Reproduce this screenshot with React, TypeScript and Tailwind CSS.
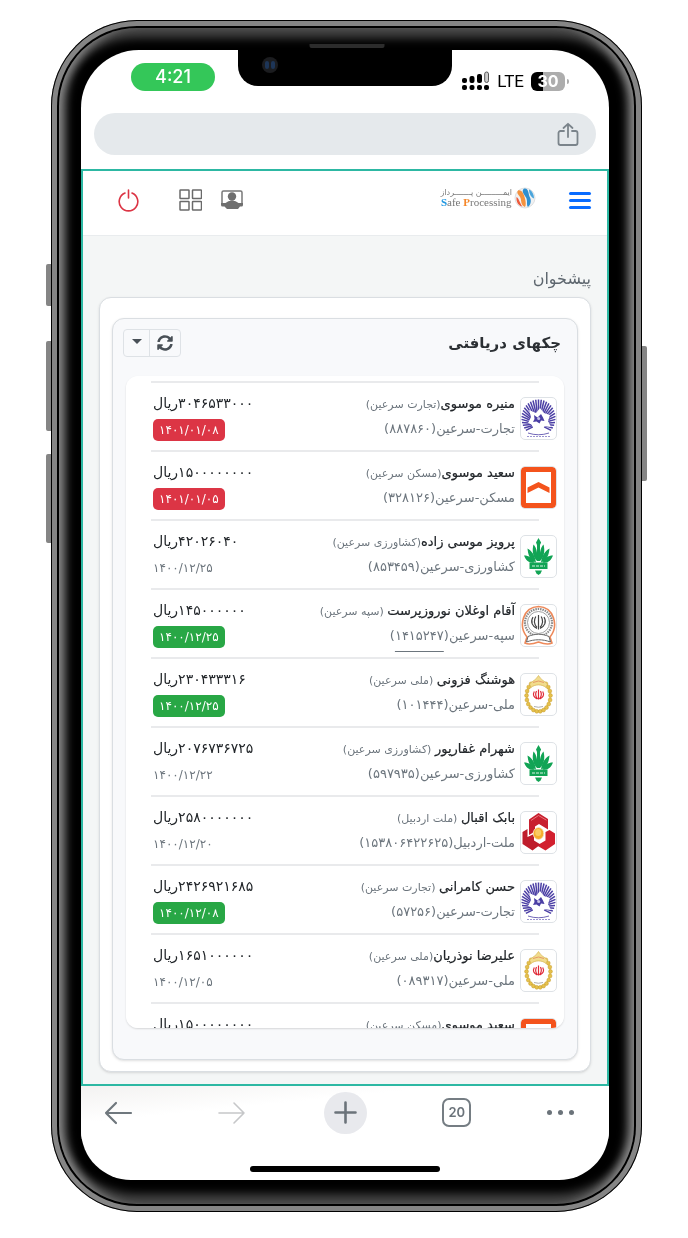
import React from "react";

type Bank = "tejarat" | "maskan" | "keshavarzi" | "sepah" | "melli" | "mellat";
type Tone = "red" | "green" | "plain";

interface Cheque {
  bank: Bank;
  name: string;
  branch: string;
  account: string;
  number: string;
  amount: string;
  date: string;
  tone: Tone;
  underlined?: boolean;
}

const cheques: Cheque[] = [
  { bank: "tejarat", name: "منیره موسوی", branch: "(تجارت سرعین)", account: "تجارت-سرعین", number: "۸۸۷۸۶۰", amount: "۳۰۴۶۵۳۳۰۰۰", date: "۱۴۰۱/۰۱/۰۸", tone: "red" },
  { bank: "maskan", name: "سعید موسوی", branch: "(مسکن سرعین)", account: "مسکن-سرعین", number: "۳۲۸۱۲۶", amount: "۱۵۰۰۰۰۰۰۰۰", date: "۱۴۰۱/۰۱/۰۵", tone: "red" },
  { bank: "keshavarzi", name: "پرویز موسی زاده", branch: "(کشاورزی سرعین)", account: "کشاورزی-سرعین", number: "۸۵۳۴۵۹", amount: "۴۲۰۲۶۰۴۰", date: "۱۴۰۰/۱۲/۲۵", tone: "plain" },
  { bank: "sepah", name: "آقام اوغلان نوروزپرست", branch: " (سپه سرعین)", account: "سپه-سرعین", number: "۱۴۱۵۲۴۷", amount: "۱۴۵۰۰۰۰۰۰", date: "۱۴۰۰/۱۲/۲۵", tone: "green", underlined: true },
  { bank: "melli", name: "هوشنگ فزونی", branch: " (ملی سرعین)", account: "ملی-سرعین", number: "۱۰۱۴۴۴", amount: "۲۳۰۴۳۳۳۱۶", date: "۱۴۰۰/۱۲/۲۵", tone: "green" },
  { bank: "keshavarzi", name: "شهرام غفارپور", branch: " (کشاورزی سرعین)", account: "کشاورزی-سرعین", number: "۵۹۷۹۳۵", amount: "۲۰۷۶۷۳۶۷۲۵", date: "۱۴۰۰/۱۲/۲۲", tone: "plain" },
  { bank: "mellat", name: "بابک اقبال", branch: " (ملت اردبیل)", account: "ملت-اردبیل", number: "۱۵۳۸۰۶۴۲۲۶۲۵", amount: "۲۵۸۰۰۰۰۰۰۰", date: "۱۴۰۰/۱۲/۲۰", tone: "plain" },
  { bank: "tejarat", name: "حسن کامرانی", branch: " (تجارت سرعین)", account: "تجارت-سرعین", number: "۵۷۲۵۶", amount: "۲۴۲۶۹۲۱۶۸۵", date: "۱۴۰۰/۱۲/۰۸", tone: "green" },
  { bank: "melli", name: "علیرضا نوذریان", branch: "(ملی سرعین)", account: "ملی-سرعین", number: "۰۸۹۳۱۷", amount: "۱۶۵۱۰۰۰۰۰۰", date: "۱۴۰۰/۱۲/۰۵", tone: "plain" },
  { bank: "maskan", name: "سعید موسوی", branch: "(مسکن سرعین)", account: "مسکن-سرعین", number: "۳۲۸۱۲۶", amount: "۱۵۰۰۰۰۰۰۰۰", date: "۱۴۰۱/۰۱/۰۵", tone: "red" },
];

const toneClass: Record<Tone, string> = {
  red: "rounded-[5px] bg-[#dc3545] px-[6px] text-white",
  green: "rounded-[5px] bg-[#28a745] px-[6px] text-white",
  plain: "text-[#6c757d]",
};

function Tejarat() {
  const rays = Array.from({ length: 29 }, (_, i) => ((-42 + i * (264 / 28)) * Math.PI) / 180);
  return (
    <>
      {rays.map((a) => {
        const x = 17.5 + 17 * Math.cos(a);
        const y = 20 - 18.5 * Math.sin(a);
        return (
          <line key={a} x1={x} y1={y} x2={x + (17.5 - x) * 0.55} y2={y + (26 - y) * 0.55} stroke="#4b3fa5" strokeWidth="1.5" />
        );
      })}
      <path d="M8 12l7 3 4-5 4 5 6 2-2 6 3 6-8-1-4 5-4-5-7-3 3-6z" fill="#fff" />
      <path d="M13 17l3.500 2.500L20 16l2 3.500 1.500 3.500-3.500-.5-1.500 3-3-2-3.500.5 1.500-3z" fill="#4b3fa5" />
      <circle cx="17.700" cy="20.500" r="1.500" fill="#c9c5ea" />
      <path d="M7 35Q17.500 38.500 28 35" fill="none" stroke="#4b3fa5" strokeWidth="0.8" />
      <path d="M6 38.500H29" stroke="#9a93cf" strokeWidth="1.200" strokeDasharray="2 1" />
    </>
  );
}

function Maskan() {
  return (
    <>
      <rect x="2.5" y="2.5" width="30" height="36" rx="1" fill="#fff" stroke="#f4531c" strokeWidth="5" />
      <path d="M6.500 20.500L17.500 15l11 5.500v5.500L17.500 20.500l-11 5.500z" fill="#f4531c" />
    </>
  );
}

function Keshavarzi() {
  return (
    <g fill="#12a455">
      <path d="M17.5 2l2.600 4.500-1.100 2.500v16h-3V9L15 6.500z" />
      <path d="M16 25C11.500 21 11 14 12.500 8.500c3 3 4 8 4 16z" />
      <path d="M19 25C23.500 21 24 14 22.500 8.500c-3 3-4 8-4 16z" />
      <path d="M15 26.500C8.500 24 7 18 6.500 12.500c4.500 2.500 7.500 7 8.500 14zM20 26.500c6.500-2.500 8-8.500 8.500-14-4.500 2.500-7.500 7-8.500 14z" />
      <path d="M13.500 26.500C8 27.500 5 24.500 3 19.500c5 0 8.500 2.500 10.500 7zM21.500 26.500c5.500 1 8.500-2 10.500-7-5 0-8.500 2.500-10.500 7z" />
      <rect x="8.500" y="26.500" width="18" height="6.500" />
      <path d="M14 34.500h7l-1.500 3L17.500 39l-2-1.500z" />
      <path d="M11 30h13" stroke="#d7f3e3" strokeWidth="1.200" strokeDasharray="3 1" />
    </g>
  );
}

function Sepah() {
  return (
    <>
      <path d="M6 32C-3 21 2 2 17.500 1.500 33 2 38 21 29 32l2 6c-4 2-8 1-13.500-1C12 39 8 40 4 38z" fill="#fff" stroke="#ee8a5b" strokeWidth="1.600" />
      <circle cx="17.500" cy="17.500" r="13.500" fill="none" stroke="#8a8a8a" strokeWidth="2.200" strokeDasharray="1.500 0.900" />
      <circle cx="17.500" cy="17.500" r="11" fill="#fff" stroke="#888" strokeWidth="0.800" />
      <path d="M7 31.500c7-3 14-3 21 0l1.500 5.500c-8-3-16-3-24 0z" fill="#fff" stroke="#666" strokeWidth="1" />
      <path d="M17.500 10v14.500M14.800 11.500c-2 3.500-2 7.500 1.200 11M20.200 11.500c2 3.500 2 7.500-1.200 11M12 12c-3 5-.5 9.500 4 11.500M23 12c3 5 .5 9.500-4 11.500" fill="none" stroke="#444" strokeWidth="1.200" />
    </>
  );
}

function Melli() {
  const leaves = Array.from({ length: 18 }, (_, i) => 128 + i * (284 / 17));
  return (
    <>
      <ellipse cx="17.500" cy="22" rx="11.500" ry="15" fill="none" stroke="#f3df93" strokeWidth="2" />
      {leaves.map((deg) => {
        const a = (deg * Math.PI) / 180;
        return <circle key={deg} cx={17.5 + 12 * Math.cos(a)} cy={22 - 15.5 * Math.sin(a)} r="1.900" fill="#e6c14c" stroke="#c59a2b" strokeWidth="0.500" />;
      })}
      <path d="M8.500 10C11.500 7 15 6 17.500 1.500 20 6 23.500 7 26.500 10l-1.500 3.500c-4-3.500-11-3.500-15 0z" fill="#f1dc8c" stroke="#d8b654" strokeWidth="0.700" />
      <path d="M12 8.500q5.500-3 11 0" fill="none" stroke="#e69a6a" strokeWidth="1" />
      <path d="M17.500 15.500v10M15.500 17c-1.500 3-1 5.500 1 8M19.500 17c1.500 3 1 5.500-1 8M13.300 17.500c-2 3.500-.3 6 3 7.500M21.700 17.500c2 3.500.3 6-3 7.500" fill="none" stroke="#e02a38" strokeWidth="1.200" />
      <path d="M13 32.500q4.500 1.500 9 0" stroke="#999" strokeWidth="0.800" fill="none" />
    </>
  );
}

function Mellat() {
  return (
    <>
      <path d="M8 7.500L17.500 1 27 7v10.500l-9-5.500-4 2.500v5L8 23z" fill="#c8202f" />
      <path d="M28.500 18l5.500 3.500V32l-9.500 6.500-8.500-5 8.500-5V20z" fill="#d2202f" />
      <path d="M1.500 20l5-3v8l6.500-3v6.500l6.500 4L11.500 38.500 1.500 32z" fill="#bf1d2c" />
      <path d="M10 8.500l7.500-5 8 4.700" fill="none" stroke="#ee7f85" strokeWidth="0.900" />
      <ellipse cx="17.500" cy="21.500" rx="5.300" ry="6" fill="#f5ae2d" stroke="#fbe3d0" strokeWidth="0.800" />
      <ellipse cx="17.200" cy="20.500" rx="3" ry="3.500" fill="#fbcb62" />
    </>
  );
}

const logos: Record<Bank, () => React.JSX.Element> = {
  tejarat: Tejarat,
  maskan: Maskan,
  keshavarzi: Keshavarzi,
  sepah: Sepah,
  melli: Melli,
  mellat: Mellat,
};

function ChequeRow({ cheque }: { cheque: Cheque }) {
  const Logo = logos[cheque.bank];
  return (
    <li>
      <div className="mx-[25px] h-[2px] bg-[#e9eaec]" />
      <div className="flex h-[67px] items-start gap-[5px] pl-[27px] pr-[7px] pt-[8px]">
        <div className="mt-[6px] h-[43px] w-[37px] shrink-0 overflow-hidden rounded-[5px] border border-[#dee2e6] bg-white">
          <svg viewBox="0 0 35 41" className="h-full w-full" aria-hidden="true">
            <Logo />
          </svg>
        </div>
        <div className="min-w-0 flex-1 whitespace-pre leading-[25px]">
          <p className="h-[25px] text-[11px] text-[#6c757d]">
            <span className="text-[13px] text-[#212529] [-webkit-text-stroke:0.2px_#212529]">{cheque.name}</span>
            {cheque.branch}
          </p>
          <p className="h-[25px] text-[13px] text-[#6c757d]">
            {cheque.account}(
            <span className={cheque.underlined ? "underline decoration-1 underline-offset-[11px]" : ""}>{cheque.number}</span>)
          </p>
        </div>
        <div className="flex shrink-0 flex-col items-end whitespace-nowrap">
          <p className="h-[25px] text-[14px] leading-[25px] text-[#212529]">{cheque.amount}ریال</p>
          <span className={`mt-[3px] text-[12px] leading-[22px] ${toneClass[cheque.tone]}`}>{cheque.date}</span>
        </div>
      </div>
    </li>
  );
}

function StatusBar() {
  return (
    <div dir="ltr" className="flex h-[63px] items-start justify-between pl-[50px] pr-[40px] pt-[13px] font-['Inter',sans-serif]">
      <div className="h-[28px] w-[84px] rounded-full bg-[#34c759] text-center text-[18px] font-medium leading-[28px] text-white">4:21</div>
      <div className="flex items-center gap-[7px] pt-[8px]">
        <svg width="28" height="20" viewBox="0 0 28 20" aria-hidden="true">
          <g fill="#000">
            <rect x="0" y="7" width="5" height="5" rx="2" />
            <rect x="7.500" y="5" width="5" height="7" rx="2" />
            <rect x="15" y="3" width="5" height="9" rx="2" />
            <rect x="0" y="14" width="5" height="5" rx="2" />
            <rect x="7.500" y="14" width="5" height="5" rx="2" />
            <rect x="15" y="14" width="5" height="5" rx="2" />
            <rect x="22" y="14" width="5" height="5" rx="2" />
          </g>
          <rect x="22.700" y="1" width="3.800" height="10.500" rx="1.900" fill="#ccc" stroke="#555" strokeWidth="1" />
        </svg>
        <span className="font-['Roboto',sans-serif] text-[17px] leading-[20px] text-black">LTE</span>
        <div className="flex items-center gap-[2px]">
          <span className="h-[19px] w-[34px] rounded-[6px] bg-linear-to-r from-black from-35% to-[#adadad] to-35% text-center text-[16px] font-bold leading-[19px] text-white">30</span>
          <span className="h-[5px] w-[2px] rounded-r-full bg-[#adadad]" />
        </div>
      </div>
    </div>
  );
}

function AddressBar() {
  return (
    <div className="mx-[13px] flex h-[42px] items-center justify-end rounded-full bg-[#e5e9ec] px-[16px]">
      <button type="button" aria-label="Share">
        <svg width="24" height="26" viewBox="0 0 24 26" fill="none" stroke="#7b848b" strokeWidth="1.800" strokeLinecap="round" strokeLinejoin="round" aria-hidden="true">
          <path d="M8 10H4.500a2 2 0 0 0-2 2v10a2 2 0 0 0 2 2h15a2 2 0 0 0 2-2V12a2 2 0 0 0-2-2H16" />
          <path d="M12 16V3M7.500 7L12 2.800 16.500 7" />
        </svg>
      </button>
    </div>
  );
}

function Brand() {
  return (
    <div className="flex items-center gap-[2px]">
      <svg width="22" height="22" viewBox="0 0 22 22" aria-hidden="true">
        <circle cx="11" cy="11" r="10" fill="#f0f1f2" stroke="#d8dadc" strokeWidth="0.800" />
        <path d="M4 3.500c4-1 6 4 7 8s1 7 0 8.500C6 18 8 13 6 10 5 8 2 6 4 3.500z" fill="#f5923e" />
        <path d="M2.500 10c3 2 3 6 6 9.500C4.500 19 2 15 2.500 10z" fill="#ee5a3b" />
        <path d="M10 1.500c5-1 4 5 6 9s0 8-2 9.500c-2-2 0-6-2-9.500s-5-6-2-9z" fill="#2f8fd0" />
        <path d="M15 2.500c3 1 5 5 5 9-3-1-5-5-5-9z" fill="#4aa5dc" />
      </svg>
      <div className="flex flex-col items-center">
        <span className="h-[9px] whitespace-nowrap text-[8px] leading-[9px] text-[#777]">ایمـــــــــن پـــــــرداز</span>
        <span dir="ltr" className="whitespace-nowrap font-['Liberation_Serif',serif] text-[11px] leading-[11px] text-[#777]">
          <span className="font-bold text-[#1e96e0]">S</span>afe <span className="font-bold text-[#f5872a]">P</span>rocessing
        </span>
      </div>
    </div>
  );
}

function AppHeader() {
  return (
    <header className="flex h-[65px] items-center border-b border-[#e9ecee] bg-white pl-[35px] pr-[16px] pb-[6px]">
      <button type="button" aria-label="منو" className="flex w-[22px] flex-col gap-[4px]">
        <span className="h-[3px] rounded-full bg-[#0a6cff]" />
        <span className="h-[3px] rounded-full bg-[#0a6cff]" />
        <span className="h-[3px] rounded-full bg-[#0a6cff]" />
      </button>
      <div className="pr-[33px] pb-[4px]">
        <Brand />
      </div>
      <div className="mr-auto flex items-center">
        <button type="button" aria-label="کاربر">
          <svg width="22" height="20" viewBox="0 0 22 20" aria-hidden="true">
            <path d="M1 15V2.500A1.500 1.500 0 0 1 2.500 1h17A1.500 1.500 0 0 1 21 2.500V15" fill="none" stroke="#777" strokeWidth="1.500" />
            <circle cx="11" cy="6.500" r="4.200" fill="#6f6f6f" />
            <path d="M0 15v-2h4.500Q7 10.500 11 10.500t6.500 2.500H22v2q0 1.500-1.500 1.500h-1.500l-2 2.500H6l-2.500-2.500H1.500Q0 16.500 0 15z" fill="#6f6f6f" />
          </svg>
        </button>
        <button type="button" aria-label="برنامه‌ها" className="mr-[19px]">
          <svg width="23" height="22" viewBox="0 0 23 22" fill="none" stroke="#6a6a6a" strokeWidth="1.500" aria-hidden="true">
            <rect x="1" y="1" width="9" height="8.500" rx="0.500" />
            <rect x="13.500" y="1" width="9" height="8.500" rx="0.500" />
            <rect x="1" y="12.500" width="9" height="8.500" rx="0.500" />
            <rect x="13.500" y="12.500" width="9" height="8.500" rx="0.500" />
          </svg>
        </button>
        <button type="button" aria-label="خروج" className="mr-[40px]">
          <svg width="21" height="23" viewBox="0 0 21 23" fill="none" stroke="#dc3545" strokeWidth="1.600" strokeLinecap="round" aria-hidden="true">
            <path d="M10.500 1v8M7 4a9.300 9.300 0 1 0 7 0" />
          </svg>
        </button>
      </div>
    </header>
  );
}

function ChequesPanel() {
  return (
    <section className="mx-[12px] rounded-[12px] border border-[#dadee2] bg-[#f8f9fb] px-[13px] pb-[31px] pt-[10px] shadow-sm">
      <div className="flex items-start justify-between pr-[3px]">
        <h2 className="h-[47px] text-[15px] font-bold leading-[28px] text-[#2b2f33]">چکهای دریافتی</h2>
        <div className="-ml-[3px] flex h-[28px] overflow-hidden rounded-[4px] border border-[#dee2e6]">
          <button type="button" aria-label="بازخوانی" className="flex w-[30px] items-center justify-center">
            <svg width="16" height="16" viewBox="0 0 512 512" fill="#495057" aria-hidden="true">
              <path d="M371 133c-32-29-72-45-115-45-78 0-145 53-163 127-1 5-6 9-12 9H24c-8 0-13-7-12-14C33 95 134 8 256 8c66 0 127 26 171 69l36-36c15-15 41-4 41 17v134c0 13-11 24-24 24H346c-21 0-32-26-17-41l42-42zM32 296h134c21 0 32 26 17 41l-42 42c32 29 72 45 115 45 78 0 145-53 163-127 1-5 6-9 12-9h57c8 0 13 7 12 14-21 115-122 202-244 202-66 0-127-26-171-69l-36 36c-15 15-41 4-41-17V320c0-13 11-24 24-24z" />
            </svg>
          </button>
          <button type="button" aria-label="گزینه‌ها" className="flex w-[26px] items-center justify-center border-r border-[#dee2e6] pb-[3px]">
            <svg width="10" height="5" viewBox="0 0 10 5" fill="#495057" aria-hidden="true">
              <path d="M0 0h10L5 5z" />
            </svg>
          </button>
        </div>
      </div>
      <ul className="h-[652px] overflow-x-hidden overflow-y-auto rounded-[12px] bg-white pt-[5px] shadow-[0_1px_2px_rgba(0,0,0,0.14)] [scrollbar-width:none]">
        {cheques.map((c, i) => (
          <ChequeRow key={i} cheque={c} />
        ))}
      </ul>
    </section>
  );
}

function BrowserNav() {
  return (
    <nav dir="ltr" className="flex h-[53px] items-center justify-between bg-linear-to-br from-[#f3f2f1] to-white to-35% pl-[23px] pr-[35px]">
      <button type="button" aria-label="Back">
        <svg width="29" height="24" viewBox="0 0 29 24" fill="none" stroke="#6f777d" strokeWidth="2.200" strokeLinecap="round" strokeLinejoin="round" aria-hidden="true">
          <path d="M27 12H2M12 2L2 12l10 10" />
        </svg>
      </button>
      <button type="button" aria-label="Forward" className="ml-[20px]">
        <svg width="29" height="24" viewBox="0 0 29 24" fill="none" stroke="#c6c7c9" strokeWidth="1.600" strokeLinecap="round" strokeLinejoin="round" aria-hidden="true">
          <path d="M2 12h25M17 2l10 10-10 10" />
        </svg>
      </button>
      <button type="button" aria-label="New tab" className="ml-[14px] flex h-[42px] w-[43px] items-center justify-center rounded-full bg-[#e8e9ed]">
        <svg width="23" height="23" viewBox="0 0 23 23" stroke="#6b737a" strokeWidth="2.600" strokeLinecap="round" aria-hidden="true">
          <path d="M1.500 11.500h20M11.500 1.500v20" />
        </svg>
      </button>
      <button type="button" aria-label="Tabs" className="ml-[12px] h-[29px] w-[29px] rounded-[7px] border-2 border-[#757d83] text-center font-['Inter',sans-serif] text-[13px] font-semibold leading-[25px] text-[#6b737a]">20</button>
      <button type="button" aria-label="More" className="ml-[12px] flex gap-[6px]">
        <span className="h-[5px] w-[5px] rounded-full bg-[#6b737a]" />
        <span className="h-[5px] w-[5px] rounded-full bg-[#6b737a]" />
        <span className="h-[5px] w-[5px] rounded-full bg-[#6b737a]" />
      </button>
    </nav>
  );
}

export default function App() {
  return (
    <main className="min-h-screen bg-white pb-[27px] pl-[51px] pr-[46px] pt-[20px] font-['DejaVu_Sans',sans-serif]">
      <div className="relative">
        <span className="absolute -left-[5px] top-[244px] h-[42px] w-[8px] rounded-l-[2px] bg-[#858585]" />
        <span className="absolute -left-[5px] top-[321px] h-[90px] w-[8px] rounded-l-[2px] bg-[#858585]" />
        <span className="absolute -left-[5px] top-[434px] h-[89px] w-[8px] rounded-l-[2px] bg-[#858585]" />
        <span className="absolute -right-[5px] top-[326px] h-[135px] w-[8px] rounded-r-[2px] bg-[#858585]" />
        <div className="relative rounded-[86px] bg-[#858585] p-[6px] shadow-[inset_0_0_0_1px_#000]">
          <div className="rounded-[80px] bg-black p-[2px]">
            <div className="rounded-[78px] bg-black pb-[24px] pl-[22px] pr-[25px] pt-[22px] shadow-[inset_12px_0_10px_-6px_#888,inset_-12px_0_10px_-6px_#888,inset_0_16px_10px_-6px_#444,inset_0_-16px_10px_-6px_#444]">
              <div className="relative overflow-hidden rounded-b-[50px] rounded-t-[58px] bg-white">
                <div className="absolute left-1/2 top-0 h-[36px] w-[214px] -translate-x-1/2 rounded-b-[20px] bg-black">
                  <span className="absolute left-[24px] top-[7px] flex h-[16px] w-[16px] items-center justify-center gap-[2px] rounded-full bg-[#1b1c1f]">
                    <span className="h-[8px] w-[4px] rounded-full bg-[#1d3557]" />
                    <span className="h-[8px] w-[4px] rounded-full bg-[#1d3557]" />
                  </span>
                </div>
                <StatusBar />
                <AddressBar />
                <div dir="rtl" className="mt-[14px] border-2 border-[#2db8a3] bg-[#f4f6f6] pb-[12px]">
                  <AppHeader />
                  <h1 className="px-[16px] pb-px pt-[26px] text-[16px] leading-[34px] text-[#5d666e]">پیشخوان</h1>
                  <div className="mx-[16px] rounded-[12px] border border-[#dadee2] bg-white pb-[11px] pt-[20px] shadow-sm">
                    <ChequesPanel />
                  </div>
                </div>
                <BrowserNav />
                <div className="pb-[8px] pt-[27px]">
                  <div className="mx-auto h-[6px] w-[190px] rounded-full bg-black" />
                </div>
              </div>
            </div>
          </div>
          <span className="absolute left-1/2 top-[24px] h-[4px] w-[75px] -translate-x-1/2 rounded-b-[2px] bg-[#2c2c2c]" />
        </div>
      </div>
    </main>
  );
}
